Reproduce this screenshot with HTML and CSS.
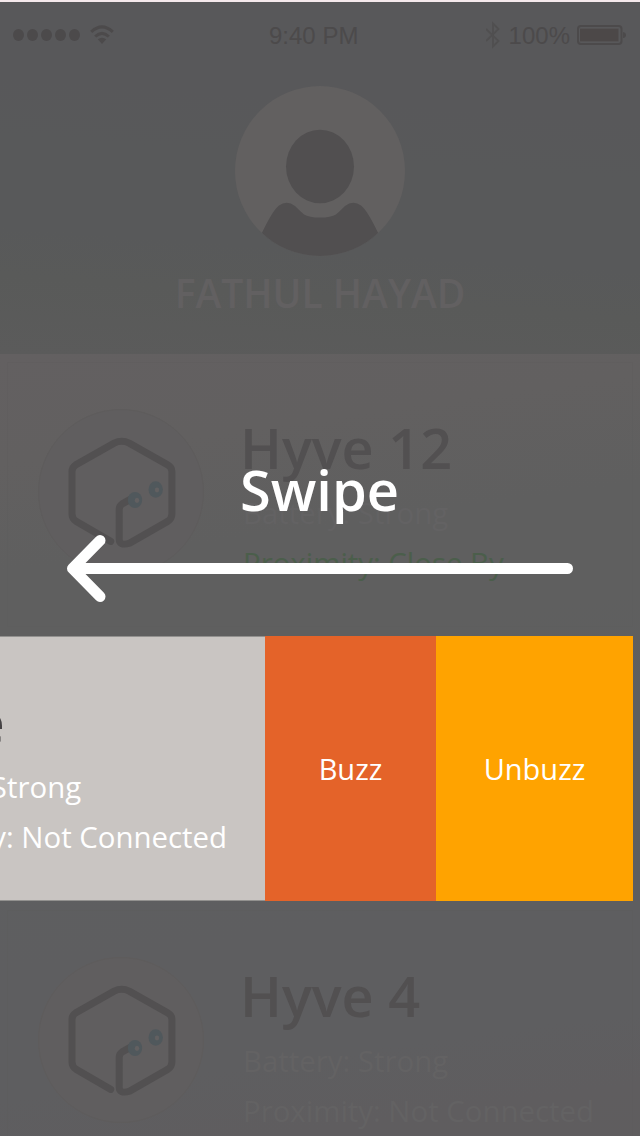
FILE: index.html
```html
<!DOCTYPE html>
<html lang="en">
<head>
<meta charset="utf-8">
<title>Hyve</title>
<link rel="stylesheet" href="styles.css">
</head>
<body>
<svg class="defs" width="0" height="0" aria-hidden="true">
  <symbol id="hive" viewBox="0 0 168 168">
    <circle cx="84" cy="84" r="82.5" fill="#605e5f" stroke="#5e5c5c" stroke-width="1"/>
    <g fill="none" stroke="#525051" stroke-width="7" stroke-linecap="round" stroke-linejoin="round" transform="translate(.2 1.900)">
      <path d="M73.5 131.500L39 111.500Q34.800 108.500 34.800 104V61.500Q34.800 57.500 38.500 55L77 33.200Q84.500 29.500 92 33.200L130.500 55Q134.700 57.500 134.700 61.500V104Q134.700 108.500 130.500 111.500L92.500 133.200Q82 136.500 82 129V99.500Q82 96 85 94L93 89.500"/>
    </g>
    <ellipse cx="98" cy="92" rx="7.200" ry="8.100" fill="#50585c"/>
    <ellipse cx="118.700" cy="81.500" rx="7.200" ry="8.300" fill="#50585c"/>
    <ellipse cx="100" cy="92.300" rx="2.200" ry="2.600" fill="#626061"/>
    <ellipse cx="120" cy="82" rx="2.200" ry="2.400" fill="#626061"/>
  </symbol>
</svg>
<main class="screen">
  <header class="profile">
    <div class="status">
      <div class="signal">
        <i></i><i></i><i></i><i></i><i></i>
        <svg class="wifi" width="24" height="20" viewBox="0 0 24 20">
          <g fill="none" stroke="#4c4a4b" stroke-width="3">
            <path d="M1.200 6.900Q12-3.200 22.800 6.900"/>
            <path d="M5.200 11.500Q12 5.100 18.800 11.500"/>
          </g>
          <path d="M7.800 14.300Q12 11 16.200 14.300L12 18.900Z" fill="#4c4a4b"/>
        </svg>
      </div>
      <span class="clock">9:40 PM</span>
      <div class="power">
        <svg class="bluetooth" width="14" height="28" viewBox="0 0 14 28">
          <path d="M0 8L12.500 20L7 25.500V2.500L12.500 8L0 20" fill="none" stroke="#504f50" stroke-width="1.800"/>
        </svg>
        <span class="percent">100%</span>
        <svg class="battery" width="50" height="20" viewBox="0 0 50 20">
          <rect x="1" y="1" width="43.500" height="18" rx="3" fill="none" stroke="#4c4a4b" stroke-width="2"/>
          <rect x="3" y="3.700" width="38.500" height="12.600" fill="#4c4848"/>
          <path d="M46 7Q49 7.500 49 10T46 13Z" fill="#4c4a4b"/>
        </svg>
      </div>
    </div>
    <svg class="avatar" width="172" height="172" viewBox="0 0 172 172">
      <clipPath id="round"><circle cx="86" cy="86" r="85"/></clipPath>
      <circle cx="86" cy="86" r="85" fill="#626060"/>
      <g fill="#514f50" clip-path="url(#round)">
        <ellipse cx="86" cy="81.500" rx="34" ry="36.800"/>
        <path d="M26 152Q38 126 45 120.500Q53 115 61 121Q66 126 70 129.500Q75 132.600 86 132.600T102 129.500Q106 126 111 121Q119 115 127 120.500Q134 126 146 152V172H26Z"/>
      </g>
    </svg>
    <h1 class="name">FATHUL HAYAD</h1>
  </header>
  <section class="list">
    <article class="row">
      <div class="card">
        <svg class="device" width="168" height="168"><use href="#hive"/></svg>
        <div class="info">
          <h2 class="title">Hyve 12</h2>
          <p class="line">Battery: Strong</p>
          <p class="line near">Proximity: Close By</p>
        </div>
      </div>
    </article>
    <article class="row swiped">
      <div class="card">
        <svg class="device" width="168" height="168"><use href="#hive"/></svg>
        <div class="info">
          <h2 class="title">Hyve</h2>
          <p class="line">Battery: Strong</p>
          <p class="line">Proximity: Not Connected</p>
        </div>
      </div>
      <div class="action buzz">Buzz</div>
      <div class="action unbuzz">Unbuzz</div>
    </article>
    <article class="row">
      <div class="card">
        <svg class="device" width="168" height="168"><use href="#hive"/></svg>
        <div class="info">
          <h2 class="title">Hyve 4</h2>
          <p class="line">Battery: Strong</p>
          <p class="line">Proximity: Not Connected</p>
        </div>
      </div>
    </article>
  </section>
  <div class="hint">
    <span class="swipe">Swipe</span>
    <svg class="arrow" width="508" height="70" viewBox="0 0 508 70">
      <path d="M34 6.500L6.500 34.500L34 62.500M10 34.500H501.500" fill="none" stroke="#fff" stroke-width="11" stroke-linecap="round" stroke-linejoin="round"/>
    </svg>
  </div>
</main>
</body>
</html>
```
FILE: styles.css
```css
* { box-sizing: border-box; }
body { margin: 0; font-family: "Open Sans", sans-serif; }
.defs { position: absolute; }
h1, h2, p { margin: 0; font-weight: 400; white-space: nowrap; }
svg { display: block; flex: none; }

.screen {
  position: relative;
  width: 640px;
  height: 1136px;
  overflow: hidden;
  border-top: 2px solid #f5e9ec;
  display: flex;
  flex-direction: column;
}

.profile {
  height: 352px;
  flex: none;
  display: flex;
  flex-direction: column;
  align-items: center;
  background: linear-gradient(184deg, #58585a 0%, #58585a 30%, #58595a 45%, #58595a 68%, #595a59 80%, #5b5b5b 100%);
}

.status {
  width: 100%;
  height: 66px;
  padding: 0 13px;
  display: grid;
  grid-template-columns: 256px auto 1fr;
  color: #4c4a4b;
  font: 24px/28px "Liberation Sans", sans-serif;
}
.signal { display: flex; gap: 3px; padding-top: 27px; }
.signal i { width: 11px; height: 12px; border-radius: 50%; background: #4c4a4b; }
.wifi { margin: -4px 0 0 7px; }
.clock { padding-top: 20px; }
.power { display: flex; justify-content: flex-end; padding-top: 20px; }
.percent { margin: 0 7px 0 9px; }
.bluetooth { margin-top: -1px; }
.battery { margin-top: 3px; }

.avatar { margin-top: 17px; }
.name { margin-top: 9px; color: #626061; font-size: 39px; line-height: 54px; font-weight: 600; }

.list {
  flex: 1;
  padding-top: 8px;
  display: flex;
  flex-direction: column;
  gap: 9px;
  background: linear-gradient(172deg, #636061 0%, #626060 12%, #5f5f5f 24%, #5f5f5f 36%, #5e5f60 50%, #5e5e60 68%, #5e5e60 82%, #5f5d5f 90%, #5f5d5e 100%);
}
.row { height: 265px; flex: none; display: flex; padding: 0 7px; }
.card {
  width: 626px;
  flex: none;
  display: flex;
  border: 1px solid rgba(88, 88, 88, .2);
}
.device { margin: 45px 0 0 29px; }
.info { padding: 51px 0 0 38px; }
.title { margin-left: -3px; color: #525051; font-size: 55.8px; line-height: 66px; font-weight: 600; }
.line { color: #636263; font-size: 29.4px; line-height: 50px; }
.title + .line { margin-top: 8px; }
.near { color: #4b5e4b; }

.swiped .card { margin-left: -367px; background: #c9c5c2; border-color: #92918f; }
.swiped .title { margin-left: -5px; color: #454344; }
.swiped .line { color: #fff; }
.action {
  display: flex;
  align-items: center;
  justify-content: center;
  color: #fff;
  font-size: 29px;
}
.buzz { width: 171px; margin-left: -1px; background: #e46329; }
.unbuzz { width: 197px; background: #ffa300; }

.hint {
  position: absolute;
  top: 449px;
  left: 65.500px;
  width: 508px;
  display: flex;
  flex-direction: column;
  align-items: center;
}
.swipe { color: #fff; font-size: 56px; line-height: 76px; font-weight: 600; }
.arrow { margin: 7px 0 0 1px; }
```
